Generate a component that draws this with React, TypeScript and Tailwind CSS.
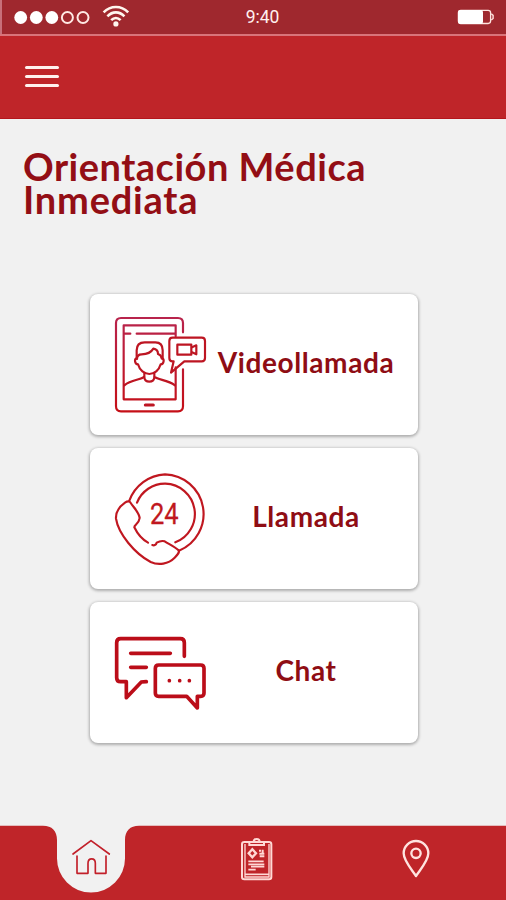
import type { ReactNode } from "react";

function StatusBar() {
  return (
    <div className="grid h-[34px] grid-cols-3 items-center border-l-2 border-[#c8707a] bg-[#9f282e] pr-3 pl-3">
      <div className="flex items-center">
        <svg width="78" height="13" viewBox="0 0 78 13" fill="#fff">
          <circle cx="6.7" cy="6.5" r="6.4" />
          <circle cx="22.3" cy="6.5" r="6.4" />
          <circle cx="37.8" cy="6.5" r="6.4" />
          <circle cx="53.4" cy="6.5" r="5.5" fill="none" stroke="#ffe9e4" strokeWidth="2" />
          <circle cx="69" cy="6.5" r="5.5" fill="none" stroke="#ffe9e4" strokeWidth="2" />
        </svg>
        <svg
          className="mt-[-2px] ml-2.5"
          width="28"
          height="22"
          viewBox="0 0 28 22"
          fill="none"
          stroke="#fff5ee"
          strokeWidth="2.6"
        >
          <path d="M1.6 7.4C8.6.2 19.2.2 26.2 7.4" />
          <path d="M5.4 11.3c5-5.2 12-5.2 17 0" />
          <path d="M9.2 15.2c2.9-3 6.5-3 9.4 0" />
          <circle cx="13.9" cy="18.9" r="2.6" fill="#fff5ee" stroke="none" />
        </svg>
      </div>
      <span className="pt-[2px] pl-[17px] text-center font-[Roboto] text-[17.5px] leading-none text-[#fff1ee]">
        9:40
      </span>
      <svg className="justify-self-end" width="37" height="16" viewBox="0 0 37 16">
        <rect x="1.4" y="1.3" width="32.2" height="13.2" rx="2.4" fill="none" stroke="#ffe4df" strokeWidth="1.3" />
        <path d="M34.3 4.8l1.8 1.6v3l-1.8 1.7" fill="none" stroke="#ffe4df" strokeWidth="1.4" />
        <rect x="1" y="1" width="25" height="14" rx="2.2" fill="#fff" />
      </svg>
    </div>
  );
}

function Header() {
  return (
    <header className="flex h-[85px] items-center border-t-2 border-b border-t-[#d9747a] border-b-[#b4161c] bg-[#bf2529] pb-[2px] pl-[25px]">
      <button aria-label="Menú" className="flex flex-col gap-[6px]">
        <span className="h-[3px] w-[34px] rounded-full bg-[#fff1ee]" />
        <span className="h-[3px] w-[34px] rounded-full bg-[#fff1ee]" />
        <span className="h-[3px] w-[34px] rounded-full bg-[#fff1ee]" />
      </button>
    </header>
  );
}

function VideoCallIcon() {
  return (
    <svg
      width="94"
      height="98"
      viewBox="102 93 282 294"
      fill="none"
      stroke="#bd1522"
      strokeWidth="6.5"
      strokeLinecap="round"
      strokeLinejoin="round"
    >
      <defs>
        <linearGradient id="phone" x1="0" y1="98" x2="0" y2="380" gradientUnits="userSpaceOnUse">
          <stop offset="0" stopColor="#b8244c" />
          <stop offset="1" stopColor="#c50f17" />
        </linearGradient>
      </defs>
      <g stroke="url(#phone)">
        <path d="M309 142v-28q0-15-15-15H123q-15 0-15 15v250q0 15 15 15h171q15 0 15-15V253" />
        <path d="M287 154v-33H131v222h156V247" />
        <path d="M134 146h17M170 146h115" />
      </g>
      <path d="M196 360h24" strokeWidth="9" />
      {/* Person */}
      <path d="M170 220c-8 2-6 17 4 18 5 18 19 29 34 29s29-11 34-29c10-1 12-16 4-18" />
      <path d="M170 220v-24q0-24 24-24h32q22 0 22 24v24" />
      <path d="M171 222c0-9 5-14 14-14 17 0 28-5 35-17 9 1 14 8 14 16 7 2 10 6 11 13" />
      <path d="M193 265v10c-12 11-38 8-60 26M223 265v10c12 11 39 8 62 26" />
      <path d="M193 277c2 17 28 17 30 0" />
      {/* Speech bubble */}
      <path d="M278 158h87q10 0 10 10v51q0 10-10 10h-52l-40 34 8-34h-3q-10 0-10-10v-51q0-10 10-10z" />
      <path d="M292 179h42v30h-42z" />
      <path d="M336 187l13-6v27l-13-6" />
    </svg>
  );
}

function CallIcon() {
  return (
    <svg
      width="94"
      height="98"
      viewBox="102 90 282 294"
      fill="none"
      stroke="#c01720"
      strokeWidth="6.5"
      strokeLinecap="round"
      strokeLinejoin="round"
    >
      <path d="M148 182A120 120 0 0 1 255 103A119 119 0 0 1 297 332" />
      <path d="M171 188A90 90 0 0 1 256 131A91 91 0 0 1 286 307" />
      {/* Handset */}
      <path d="M204 308c-18-10-31-25-41-46-1-8 14-10 16-28-2-17-17-30-29-48-4-3-9-2-15 2-17 12-28 30-27 48 7 46 57 105 104 130 24 11 53 6 72-13 9-9 15-15 12-22-13-11-28-18-42-27-9-3-15-1-24 4-2 8-8 9-13 7" />
      <text
        x="253"
        y="252"
        textAnchor="middle"
        fill="#c01720"
        strokeWidth="0.8"
        className="font-[Roboto] text-[88px] font-normal"
        textLength="86"
        lengthAdjust="spacingAndGlyphs"
      >
        24
      </text>
    </svg>
  );
}

function ChatIcon() {
  return (
    <svg
      width="94"
      height="98"
      viewBox="102 87 282 294"
      fill="none"
      stroke="#bb0d19"
      strokeWidth="11"
      strokeLinecap="round"
      strokeLinejoin="round"
    >
      <path d="M313 184v-41q0-12-12-12H122q-12 0-12 12v105q0 12 12 12h17v48l45-47q3-1 15-1" />
      <path d="M152 175h119M152 217h47" />
      <path d="M236 210h126q10 0 10 10v74q0 10-10 10h-10v35l-32-35h-84q-10 0-10-10v-74q0-10 10-10z" />
      <path d="M268 257h.1M299 257h.1M328 257h.1" />
    </svg>
  );
}

function OptionCard({ icon, label }: { icon: ReactNode; label: string }) {
  return (
    <button className="flex h-[141px] w-[328px] items-center rounded-lg bg-white pr-3.5 pl-6 shadow-[0_1px_3px_1px_rgba(0,0,0,0.28)]">
      {icon}
      <span className="flex-1 pb-[5px] text-center text-[28px] leading-none font-bold tracking-[0.6px] text-[#8f0d14]">
        {label}
      </span>
    </button>
  );
}

function BottomNav() {
  return (
    <nav className="relative h-[75px]">
      {/* Bar with the notch around the active tab */}
      <svg className="absolute inset-0" width="506" height="75" viewBox="0 0 506 75">
        <path
          d="M0 .8h43C52 .8 57 6 57 15v18.5a34 34 0 0 0 68 0V15C125 6 130 .8 139 .8h367V75H0z"
          fill="#bf2529"
        />
      </svg>
      <div className="relative flex h-full items-start">
        <button aria-label="Inicio" className="mt-[14px] ml-[71px]">
          <svg
            width="40"
            height="37"
            viewBox="213 87 120 111"
            fill="none"
            stroke="#c2202a"
            strokeWidth="5"
            strokeLinecap="round"
            strokeLinejoin="round"
          >
            <path d="M219 132l54-40 55 40" />
            <path d="M231 138v52h33v-30c0-18 22-18 22 0v30h32v-52" />
          </svg>
        </button>
        <button aria-label="Historial" className="mt-[11px] ml-[129px]">
          <svg width="34" height="46" viewBox="75 48 102 138" fill="none" stroke="#ffd9d5" strokeWidth="6">
            <rect x="81" y="66" width="88" height="112" rx="7" />
            <path d="M90 72v99h72V72" strokeWidth="4" />
            <path d="M103 75v-9h13c0-12 18-12 18 0h13v9z" />
            <path d="M90 163h72" strokeWidth="5" />
            <path d="M112 88l11 12-11 12-11-12z" strokeWidth="7" />
            <path d="M132 92h6M143 89v11M133 101h15M134 109h14" strokeWidth="6" />
            <path d="M100 124h46M100 133h48M108 140h40M100 149h22" strokeWidth="5.5" />
          </svg>
        </button>
        <button aria-label="Ubicación" className="mt-[13px] ml-[126px]">
          <svg
            width="32"
            height="42"
            viewBox="58 116 96 126"
            fill="none"
            stroke="#ffe4e0"
            strokeWidth="7"
            strokeLinejoin="round"
          >
            <path d="M106 230C91 208 69 184 69 162a37 37 0 0 1 74 0c0 22-22 46-37 68z" />
            <circle cx="106" cy="162" r="14" />
          </svg>
        </button>
      </div>
    </nav>
  );
}

export default function App() {
  return (
    <div className="flex h-[900px] w-[506px] flex-col overflow-hidden bg-[#f1f1f1] font-['Lato',sans-serif]">
      <StatusBar />
      <Header />
      <main className="flex-1">
        <h1 className="pt-[31px] pl-[23px] text-[38px] leading-[33px] font-bold tracking-[0.5px] text-[#930e15]">
          Orientación Médica
          <br />
          <span className="tracking-[0.8px]">Inmediata</span>
        </h1>
        <div className="mt-[78px] ml-[90px] flex flex-col gap-[13px]">
          <OptionCard icon={<VideoCallIcon />} label="Videollamada" />
          <OptionCard icon={<CallIcon />} label="Llamada" />
          <OptionCard icon={<ChatIcon />} label="Chat" />
        </div>
      </main>
      <BottomNav />
    </div>
  );
}
